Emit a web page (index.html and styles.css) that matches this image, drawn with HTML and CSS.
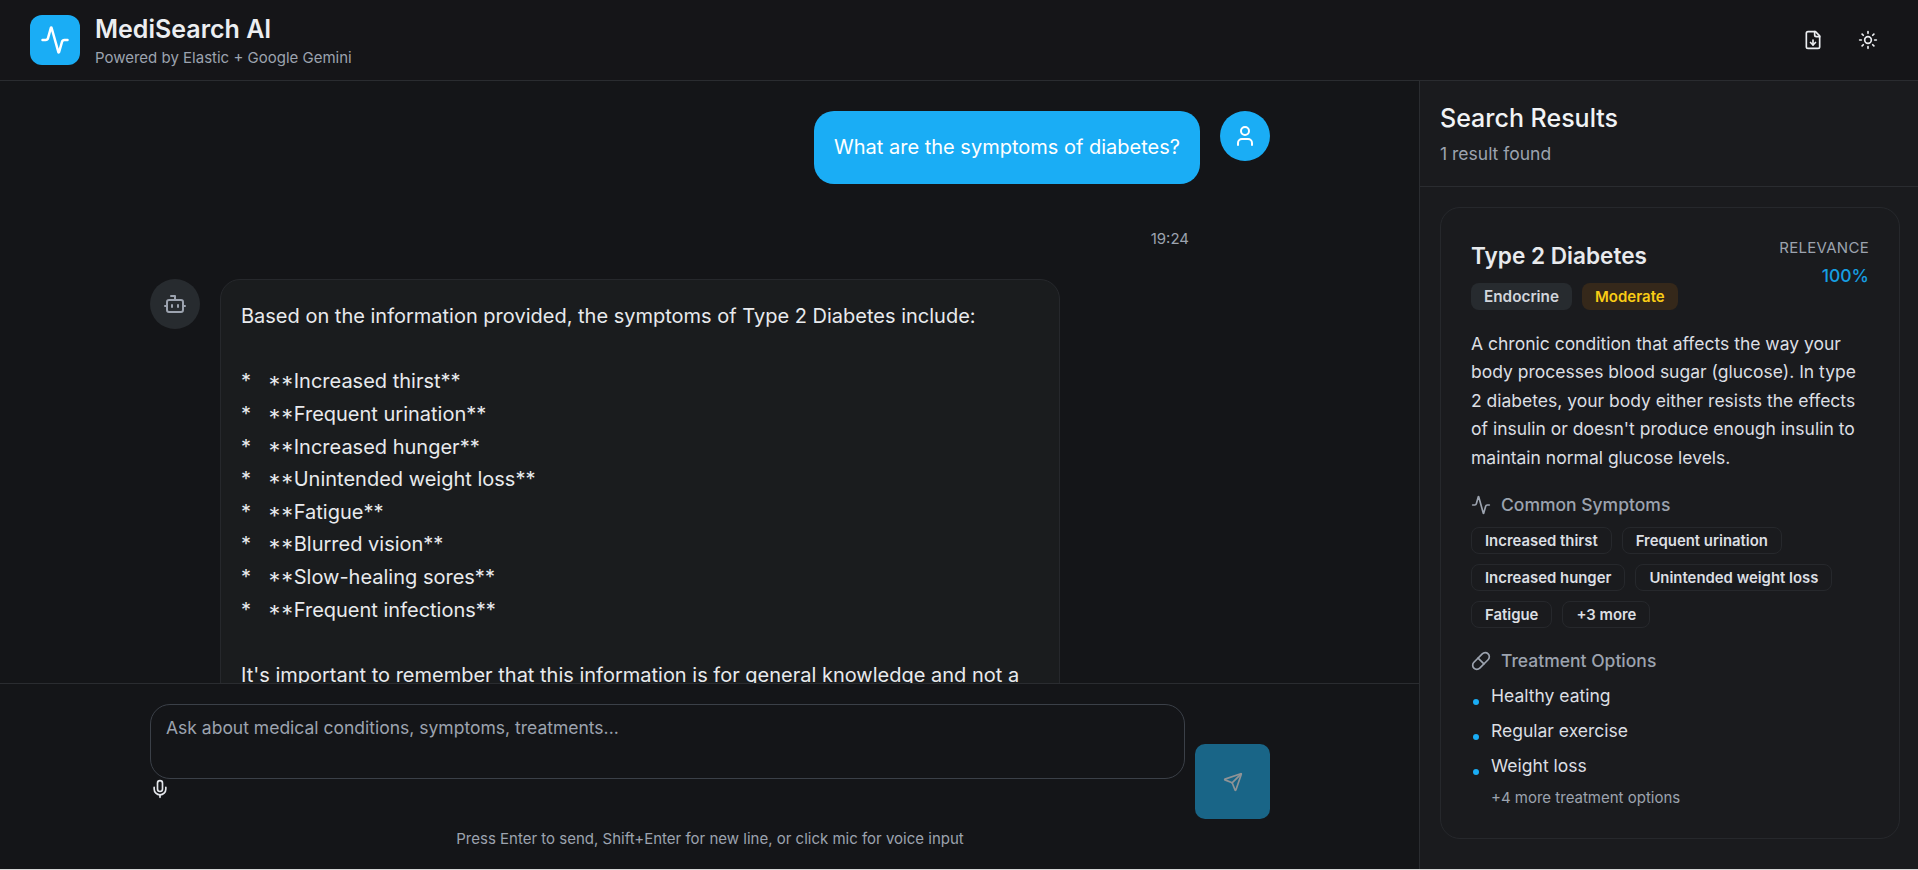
FILE: index.html
```html
<!DOCTYPE html>
<html lang="en">
<head>
<meta charset="utf-8">
<title>MediSearch AI</title>
<link rel="stylesheet" href="styles.css">
</head>
<body>
<div class="app">
  <header class="topbar">
    <div class="brand">
      <div class="logo">
        <svg class="i i-logo" viewBox="0 0 24 24"><path d="M22 12h-2.48a2 2 0 0 0-1.93 1.46l-2.35 8.36a.25.25 0 0 1-.48 0L9.24 2.18a.25.25 0 0 0-.48 0l-2.35 8.36A2 2 0 0 1 4.49 12H2"/></svg>
      </div>
      <div class="brand-text">
        <h1 class="brand-name">MediSearch AI</h1>
        <p class="brand-sub">Powered by Elastic + Google Gemini</p>
      </div>
    </div>
    <div class="top-actions">
      <button class="icon-btn"><svg class="i i-20" viewBox="0 0 24 24"><path d="M15 2H6a2 2 0 0 0-2 2v16a2 2 0 0 0 2 2h12a2 2 0 0 0 2-2V7Z"/><path d="M14 2v4a2 2 0 0 0 2 2h4"/><path d="M12 18v-6"/><path d="m9 15 3 3 3-3"/></svg></button>
      <button class="icon-btn"><svg class="i i-20" viewBox="0 0 24 24"><circle cx="12" cy="12" r="4"/><path d="M12 2v2"/><path d="M12 20v2"/><path d="m4.93 4.93 1.41 1.41"/><path d="m17.66 17.66 1.41 1.41"/><path d="M2 12h2"/><path d="M20 12h2"/><path d="m6.34 17.66-1.41 1.41"/><path d="m19.07 4.93-1.41 1.41"/></svg></button>
    </div>
  </header>
  <div class="body">
    <main class="chat">
      <div class="messages">
        <div class="msg msg-user">
          <div class="msg-col">
            <div class="bubble bubble-user">What are the symptoms of diabetes?</div>
            <div class="time">19:24</div>
          </div>
          <div class="avatar avatar-user"><svg class="i i-24" viewBox="0 0 24 24"><path d="M19 21v-2a4 4 0 0 0-4-4H9a4 4 0 0 0-4 4v2"/><circle cx="12" cy="7" r="4"/></svg></div>
        </div>
        <div class="msg msg-bot">
          <div class="avatar avatar-bot"><svg class="i i-24" viewBox="0 0 24 24"><path d="M12 8V4H8"/><rect width="16" height="12" x="4" y="8" rx="2"/><path d="M2 14h2"/><path d="M20 14h2"/><path d="M15 13v2"/><path d="M9 13v2"/></svg></div>
          <div class="bubble bubble-bot">
            <p class="para">Based on the information provided, the symptoms of Type 2 Diabetes include:</p>
            <ul class="md-list">
              <li class="md-item">*   <span class="aster">**</span>Increased thirst**</li>
              <li class="md-item">*   <span class="aster">**</span>Frequent urination**</li>
              <li class="md-item">*   <span class="aster">**</span>Increased hunger**</li>
              <li class="md-item">*   <span class="aster">**</span>Unintended weight loss**</li>
              <li class="md-item">*   <span class="aster">**</span>Fatigue**</li>
              <li class="md-item">*   <span class="aster">**</span>Blurred vision**</li>
              <li class="md-item">*   <span class="aster">**</span>Slow-healing sores**</li>
              <li class="md-item">*   <span class="aster">**</span>Frequent infections**</li>
            </ul>
            <p class="para">It's important to remember that this information is for general knowledge and not a substitute for professional medical advice.</p>
          </div>
        </div>
      </div>
      <div class="composer">
        <div class="composer-row">
          <div class="input-col">
            <textarea class="input" placeholder="Ask about medical conditions, symptoms, treatments..."></textarea>
            <button class="mic"><svg class="i i-20" viewBox="0 0 24 24"><path d="M12 19v3"/><path d="M19 10v2a7 7 0 0 1-14 0v-2"/><rect x="9" y="2" width="6" height="13" rx="3"/></svg></button>
          </div>
          <button class="send"><svg class="i i-20" viewBox="0 0 24 24"><path d="M14.536 21.686a.5.5 0 0 0 .937-.024l6.5-19a.496.496 0 0 0-.635-.635l-19 6.5a.5.5 0 0 0-.024.937l7.93 3.18a2 2 0 0 1 1.112 1.11z"/><path d="m21.854 2.147-10.94 10.939"/></svg></button>
        </div>
        <p class="hint">Press Enter to send, Shift+Enter for new line, or click mic for voice input</p>
      </div>
    </main>
    <aside class="side">
      <div class="side-head">
        <h2 class="side-title">Search Results</h2>
        <p class="side-count">1 result found</p>
      </div>
      <div class="side-list">
        <article class="card">
          <div class="card-top">
            <div>
              <h3 class="card-title">Type 2 Diabetes</h3>
              <div class="badges">
                <span class="badge badge-cat">Endocrine</span>
                <span class="badge badge-sev">Moderate</span>
              </div>
            </div>
            <div class="rel">
              <div class="rel-label">RELEVANCE</div>
              <div class="rel-value">100%</div>
            </div>
          </div>
          <p class="desc">A chronic condition that affects the way your body processes blood sugar (glucose). In type 2 diabetes, your body either resists the effects of insulin or doesn't produce enough insulin to maintain normal glucose levels.</p>
          <div class="sec-head">
            <svg class="i i-20" viewBox="0 0 24 24"><path d="M22 12h-2.48a2 2 0 0 0-1.93 1.46l-2.35 8.36a.25.25 0 0 1-.48 0L9.24 2.18a.25.25 0 0 0-.48 0l-2.35 8.36A2 2 0 0 1 4.49 12H2"/></svg>
            <span>Common Symptoms</span>
          </div>
          <div class="tags">
            <span class="tag">Increased thirst</span>
            <span class="tag">Frequent urination</span>
            <span class="tag">Increased hunger</span>
            <span class="tag">Unintended weight loss</span>
            <span class="tag">Fatigue</span>
            <span class="tag">+3 more</span>
          </div>
          <div class="sec-head sec-treat">
            <svg class="i i-20" viewBox="0 0 24 24"><path d="m10.5 20.5 10-10a4.95 4.95 0 1 0-7-7l-10 10a4.95 4.95 0 1 0 7 7Z"/><path d="m8.5 8.5 7 7"/></svg>
            <span>Treatment Options</span>
          </div>
          <ul class="treat">
            <li class="treat-item">Healthy eating</li>
            <li class="treat-item">Regular exercise</li>
            <li class="treat-item">Weight loss</li>
          </ul>
          <p class="treat-more">+4 more treatment options</p>
        </article>
      </div>
    </aside>
  </div>
</div>
</body>
</html>
```

FILE: styles.css
```css
* { box-sizing: border-box; margin: 0; padding: 0; }
html { background: #d8d8d8; }
body { height: 869px; overflow: hidden; font-family: Inter, "Noto Sans", sans-serif; font-size: 16px; line-height: 1.6; color: #e4e6eb; }
.app { height: 869px; display: flex; flex-direction: column; background: #141518; }
.i { fill: none; stroke: currentColor; stroke-width: 2; stroke-linecap: round; stroke-linejoin: round; flex: none; display: block; }
.i-logo { width: 30px; height: 30px; }
.i-24 { width: 24px; height: 24px; }
.i-20 { width: 20px; height: 20px; }

.topbar { height: 81px; flex: none; display: flex; justify-content: space-between; align-items: center; padding: 0 30px; background: #151518; border-bottom: 1px solid #2a2c30; }
.brand { display: flex; align-items: center; gap: 15px; }
.logo { width: 50px; height: 50px; border-radius: 12px; background: #1aadf5; color: #fff; display: flex; align-items: center; justify-content: center; }
.brand-text { margin-top: 1px; }
.brand-name { font-size: 25px; font-weight: 600; line-height: 34px; color: #eceef1; }
.brand-sub { font-size: 15px; line-height: 22px; color: #9ca3af; margin-top: 1px; }
.top-actions { display: flex; gap: 15px; }
.icon-btn { width: 40px; height: 40px; border: 0; background: transparent; color: #eceef1; display: flex; align-items: center; justify-content: center; }

.body { flex: 1; min-height: 0; display: flex; }
.chat { flex: 1; min-width: 0; display: flex; flex-direction: column; }
.messages { flex: 1; min-height: 0; overflow: hidden; padding: 30px 149px 0 150px; display: flex; flex-direction: column; gap: 29px; }
.msg { display: flex; gap: 20px; flex: none; }
.msg-user { justify-content: flex-end; }
.msg-col { display: flex; flex-direction: column; align-items: flex-end; }
.avatar { width: 50px; height: 50px; border-radius: 50%; flex: none; display: flex; align-items: center; justify-content: center; }
.avatar-user { background: #1aadf5; color: #fff; }
.avatar-bot { background: #272b2f; color: #9ca3af; }
.bubble { font-size: 20px; border-radius: 20px; padding: 20px; }
.bubble-user { background: #1aadf5; color: #fff; line-height: 33px; }
.bubble-bot { width: 840px; line-height: 32.64px; background: #1a1c1e; border: 1px solid #26282c; color: #e8eaed; }
.para { white-space: pre-wrap; }
.md-list { list-style: none; margin: 32.64px 0; }
.md-item { white-space: pre-wrap; }
.aster { font-feature-settings: "case" 1; }
.time { font-size: 15px; line-height: 22px; color: #9ca3af; margin-top: 44px; padding-right: 11px; }

.composer { flex: none; height: 186px; padding: 20px 149px 0 150px; border-top: 1px solid #2a2c30; }
.composer-row { display: flex; gap: 10px; align-items: flex-end; }
.input-col { flex: 1; min-width: 0; display: flex; flex-direction: column; align-items: flex-start; }
.input { display: block; width: 100%; height: 75px; resize: none; padding: 9px 15px; background: transparent; border: 1px solid #3b4048; border-radius: 20px; font-family: inherit; font-size: 17.5px; line-height: 28px; color: #e4e6eb; }
.input::placeholder { color: #9ca3af; opacity: 1; }
.mic { display: flex; align-items: flex-start; height: 40px; width: 20px; border: 0; background: transparent; color: #e4e6eb; }
.send { width: 75px; height: 75px; flex: none; border: 0; border-radius: 10px; background: #196587; color: #8f9396; display: flex; align-items: center; justify-content: center; }
.hint { margin-top: 9px; font-size: 15px; line-height: 22px; text-align: center; color: #9ca3af; }

.side { width: 499px; flex: none; display: flex; flex-direction: column; background: #1a1b1e; border-left: 1px solid #2a2c30; }
.side-head { flex: none; height: 106px; padding: 20px; border-bottom: 1px solid #2a2c30; }
.side-title { font-size: 25px; font-weight: 500; line-height: 34px; color: #f1f3f5; }
.side-count { font-size: 17.5px; line-height: 28px; margin-top: 5px; color: #9ca3af; }
.side-list { flex: 1; min-height: 0; overflow: hidden; padding: 20px 18px 20px 20px; }
.card { border: 1px solid #26282c; border-radius: 20px; padding: 30px; height: 632px; }
.card-top { display: flex; justify-content: space-between; }
.card-title { font-size: 22.6px; font-weight: 600; line-height: 36px; color: #e8eaed; }
.badges { display: flex; gap: 10px; margin-top: 9px; }
.badge { font-size: 15px; font-weight: 600; line-height: 27px; height: 27px; padding: 0 13px; border-radius: 8px; }
.badge-cat { background: #272b2f; color: #d1d5db; font-size: 15.3px; }
.badge-sev { background: #35281a; color: #facc15; }
.rel { text-align: right; }
.rel-label { font-size: 15px; letter-spacing: .3px; line-height: 22px; margin-top: -1px; color: #9ca3af; }
.rel-value { font-size: 17.5px; font-weight: 500; line-height: 28px; margin-top: 3px; color: #169fe2; }
.desc { font-size: 17.5px; line-height: 28.44px; margin-top: 20px; color: #dcdfe3; }
.sec-head { display: flex; align-items: center; gap: 10px; margin-top: 19px; font-size: 17.5px; line-height: 28px; font-weight: 500; color: #9ca3af; }
.sec-treat { margin-top: 19px; }
.tags { display: flex; flex-wrap: wrap; gap: 10px; margin-top: 8px; }
.tag { font-size: 14.9px; font-weight: 600; line-height: 26px; height: 27px; padding: 0 13px; border: 1px solid #26282c; border-radius: 8px; color: #dcdfe3; }
.treat { list-style: none; margin-top: 7px; }
.treat-item { position: relative; padding-left: 20px; font-size: 17.5px; line-height: 28px; margin-bottom: 7px; color: #dcdfe3; }
.treat-item::before { content: ""; position: absolute; left: 2px; top: 17px; width: 6px; height: 6px; border-radius: 50%; background: #1aadf5; }
.treat-more { padding-left: 20px; font-size: 15px; line-height: 22px; color: #9ca3af; }
```
